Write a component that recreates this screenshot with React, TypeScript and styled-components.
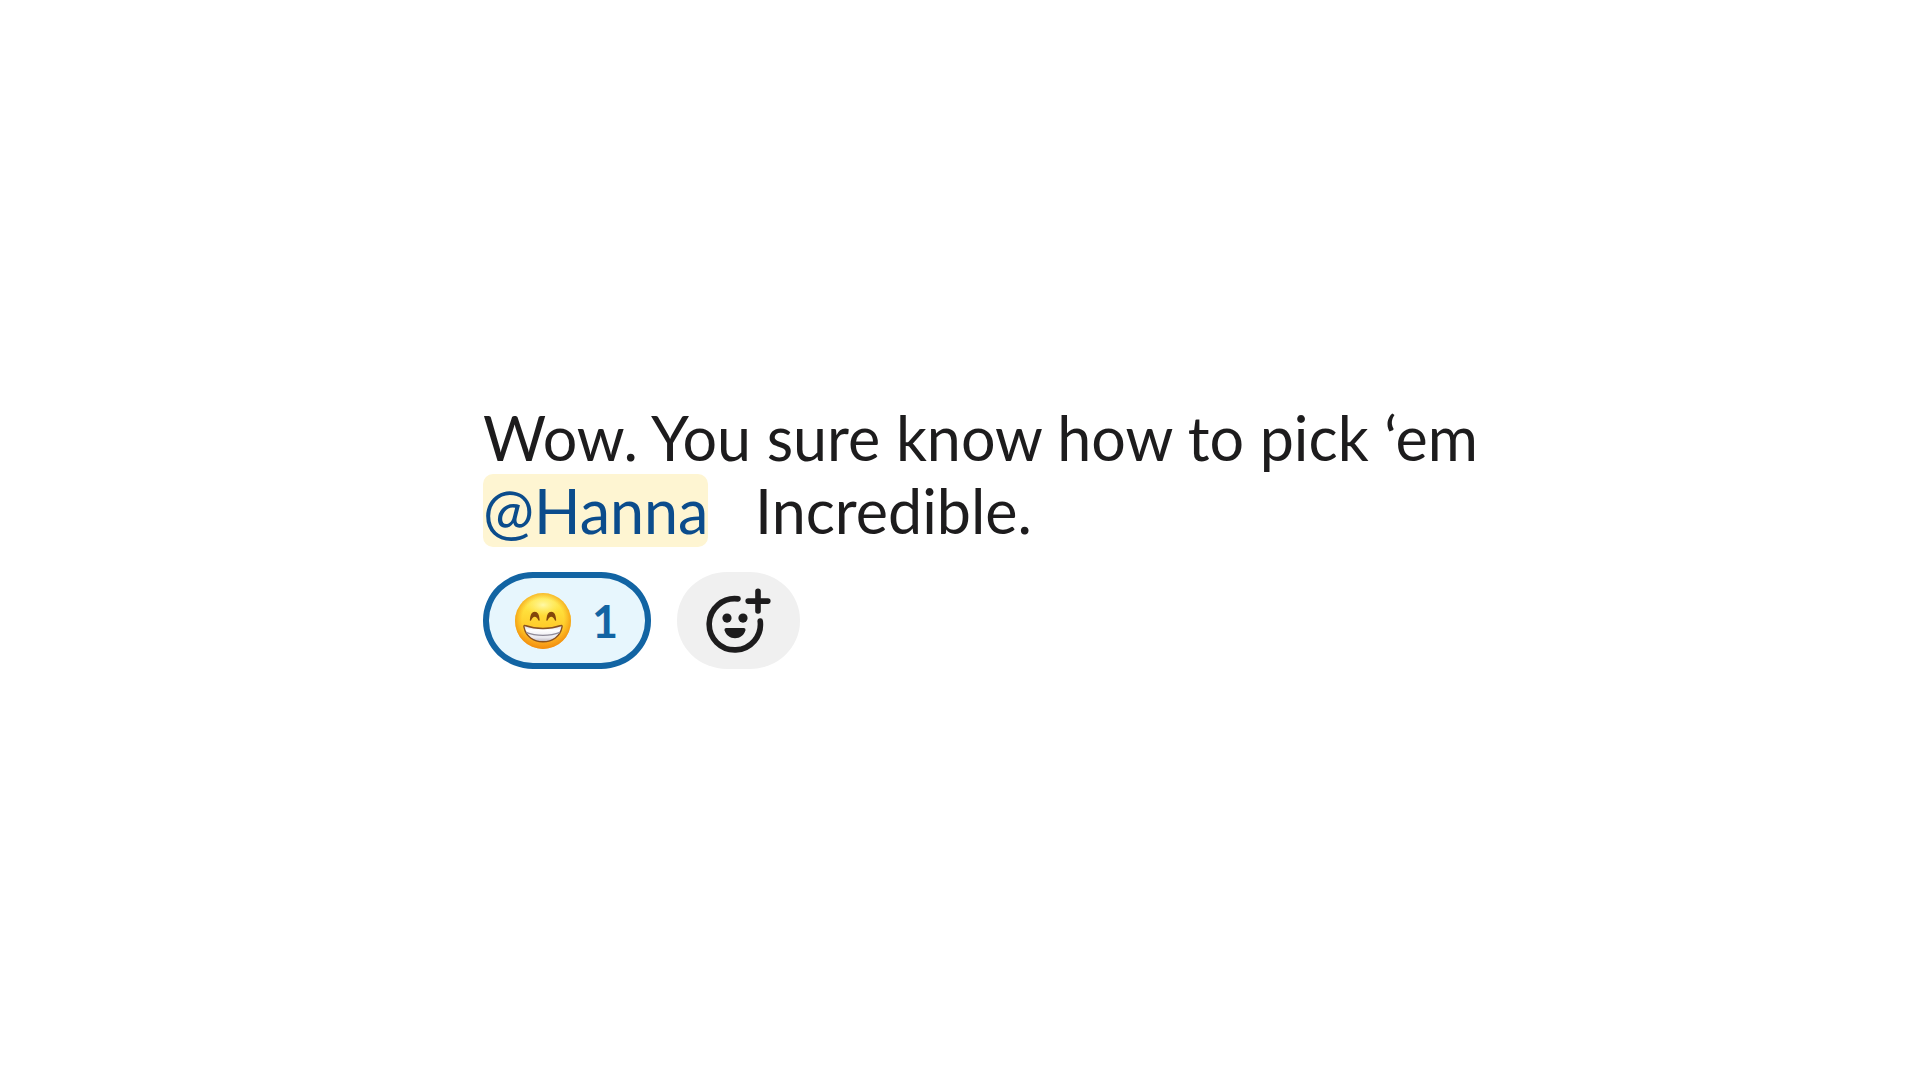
import React from "react";
import styled, { createGlobalStyle } from "styled-components";

const GlobalStyle = createGlobalStyle`
  * { box-sizing: border-box; }
  body {
    margin: 0;
    background: #ffffff;
    font-family: Lato, "Noto Sans", sans-serif;
  }
`;

const Page = styled.main`
  min-height: 100vh;
  padding: 401px 24px 48px 483px;
`;

const Message = styled.p`
  margin: 0;
  max-width: 1040px;
  color: #1d1c1d;
  font-size: 61px;
  line-height: 73px;
`;

const Mention = styled.a`
  display: inline-block;
  margin-right: 31px;
  border-radius: 10px;
  background: #fef5d2;
  color: #0b4c8c;
  text-decoration: none;
`;

const Reactions = styled.div`
  display: flex;
  gap: 26px;
  margin-top: 25px;
`;

const Pill = styled.button<{ $active?: boolean }>`
  display: flex;
  align-items: center;
  justify-content: center;
  gap: 20px;
  width: ${({ $active }) => ($active ? 168 : 123)}px;
  height: 97px;
  padding: 0 2px 0 0;
  border: ${({ $active }) => ($active ? "6px solid #1264a3" : "0")};
  border-radius: 50px / 48px;
  background: ${({ $active }) => ($active ? "#e7f6fd" : "#f0f0f0")};
  color: ${({ $active }) => ($active ? "#1264a3" : "#1d1c1d")};
  font-family: inherit;
  font-size: 45px;
  font-weight: 700;
  line-height: 56px;
  cursor: pointer;
`;

const Icon = styled.svg`
  display: block;
  flex: none;
`;

function GrinEmoji() {
  return (
    <Icon width="58" height="58" viewBox="0 0 58 58" aria-hidden="true">
      <defs>
        <linearGradient id="face" x1="0" y1="0" x2="0" y2="1">
          <stop offset="0" stopColor="#ffee58" />
          <stop offset="0.3" stopColor="#ffe03c" />
          <stop offset="0.65" stopColor="#ffc928" />
          <stop offset="1" stopColor="#fb9d1e" />
        </linearGradient>
        <radialGradient id="rim" cx="0.5" cy="0.48" r="0.52">
          <stop offset="0.72" stopColor="#f59a10" stopOpacity="0" />
          <stop offset="1" stopColor="#ee8608" stopOpacity="0.75" />
        </radialGradient>
        <radialGradient id="shine" cx="0.5" cy="0.5" r="0.5">
          <stop offset="0" stopColor="#fffcb8" stopOpacity="0.85" />
          <stop offset="1" stopColor="#fff176" stopOpacity="0" />
        </radialGradient>
        <linearGradient id="teeth" x1="0" y1="0" x2="0" y2="1">
          <stop offset="0" stopColor="#d9d8df" />
          <stop offset="0.3" stopColor="#ffffff" />
          <stop offset="0.75" stopColor="#e9e8ee" />
          <stop offset="1" stopColor="#b9b4bb" />
        </linearGradient>
      </defs>
      <circle cx="29" cy="29" r="28" fill="url(#face)" />
      <ellipse cx="29" cy="13" rx="19" ry="11" fill="url(#shine)" />
      <circle cx="29" cy="29" r="28" fill="url(#rim)" />
      <path d="M16.5 28C17.2 17.8 24.3 17.8 25 28C22.8 22.6 18.7 22.6 16.5 28Z" fill="#83460c" stroke="#83460c" strokeWidth="1.4" strokeLinejoin="round" />
      <path d="M33 28C33.7 17.8 40.8 17.8 41.5 28C39.3 22.6 35.2 22.6 33 28Z" fill="#83460c" stroke="#83460c" strokeWidth="1.4" strokeLinejoin="round" />
      <path d="M11 33.5C22 37.5 36 37.5 47 33.5C48 33.1 48.3 34 48 35.2C46.2 44.5 38.5 49.8 29 49.8C19.5 49.8 11.8 44.5 10 35.2C9.7 34 10 33.1 11 33.5Z" fill="url(#teeth)" stroke="#895120" strokeWidth="1.4" />
      <path d="M12 40.3C22 44.3 36 44.3 46 40.3" fill="none" stroke="#8f8b98" strokeWidth="1.3" />
    </Icon>
  );
}

function AddReactionIcon() {
  return (
    <Icon width="66" height="66" viewBox="2 0 66 66" aria-hidden="true">
      <g fill="none" stroke="currentColor" strokeWidth="5.6" strokeLinecap="round">
        <path d="M35 10.9A25.6 25.6 0 1 0 57.2 33.1" />
        <path d="M55 3.3V23M45.2 13.1H64.8" />
      </g>
      <circle cx="24" cy="30.1" r="4.6" fill="currentColor" />
      <circle cx="40" cy="30.1" r="4.6" fill="currentColor" />
      <path d="M23.4 40H40.6C42 40 42.7 40.9 42.4 42.3C41.2 47.1 37 50.3 32 50.3S22.8 47.1 21.6 42.3C21.3 40.9 22 40 23.4 40Z" fill="currentColor" />
    </Icon>
  );
}

export default function App() {
  return (
    <>
      <GlobalStyle />
      <Page>
        <Message>
          Wow. You sure know how to pick ‘em <Mention href="#hanna">@Hanna</Mention> Incredible.
        </Message>
        <Reactions>
          <Pill $active type="button" aria-pressed="true">
            <GrinEmoji />
            <span>1</span>
          </Pill>
          <Pill type="button" aria-label="Add reaction">
            <AddReactionIcon />
          </Pill>
        </Reactions>
      </Page>
    </>
  );
}
